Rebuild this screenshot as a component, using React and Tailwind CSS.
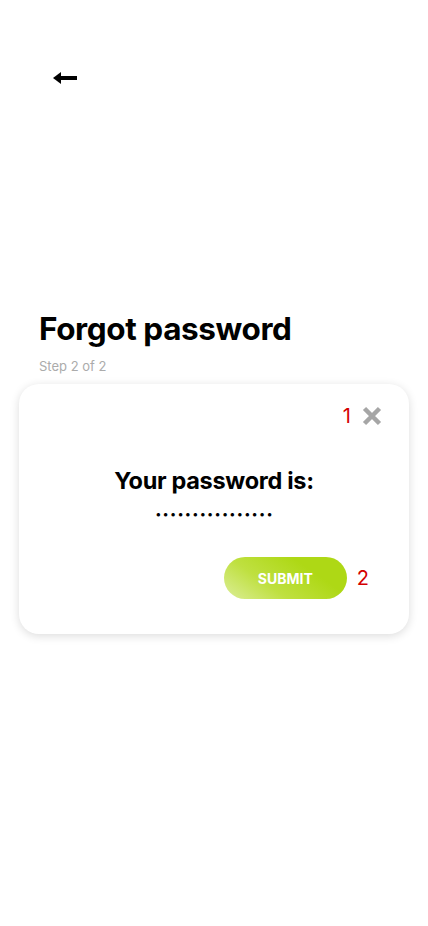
const App = () => {
  return (
    <div className="w-[428px] min-h-[926px] bg-white font-['Inter',sans-serif]">
      {/* Back */}
      <div className="pt-[70px] pl-[52px] h-[300px]">
        <button className="block">
          <svg width="26" height="16" viewBox="0 0 26 16">
            <path d="M9 2 L1 8 L9 14 Z" fill="#000" />
            <rect x="7" y="6" width="18" height="4" fill="#000" />
          </svg>
        </button>
      </div>

      {/* Heading */}
      <div className="pl-[39px] pt-[10px]">
        <h1 className="text-[31.5px] leading-[38px] font-bold text-black tracking-[-0.4px]">
          Forgot password
        </h1>
        <p className="mt-[10px] text-[13px] leading-[16px] text-[#ababab]">
          Step 2 of 2
        </p>
      </div>

      {/* Card */}
      <div className="mx-[19px] mt-[10px] h-[250px] rounded-[20px] bg-white shadow-[0_2px_10px_rgba(0,0,0,0.14)] flex flex-col">
        <div className="flex justify-end items-center pt-[20px] pr-[27px] gap-[11px]">
          <span className="text-[20px] leading-[24px] text-[#d40000]">1</span>
          <svg width="20" height="20" viewBox="0 0 20 20">
            <path d="M2.5 2.5 L17.5 17.5 M17.5 2.5 L2.5 17.5" stroke="#a6a6a6" strokeWidth="4.5" />
          </svg>
        </div>
        <div className="flex flex-col items-center mt-[39px]">
          <h2 className="text-[23.5px] leading-[28px] font-bold text-black tracking-[-0.3px]">
            Your password is:
          </h2>
          <p className="mt-[9px] text-[11px] leading-[20px] font-bold text-black tracking-[2.2px] pl-[2px]">
            ••••••••••••••••
          </p>
        </div>
        <div className="flex justify-end items-center mt-[33px] pr-[40px] gap-[10px]">
          <button className="w-[123px] h-[42px] rounded-full bg-[linear-gradient(35deg,#dcee9a_0%,#bfe040_35%,#aed815_70%)] text-white text-[14px] font-bold">
            SUBMIT
          </button>
          <span className="text-[20px] leading-[24px] text-[#d40000]">2</span>
        </div>
      </div>
    </div>
  );
};

export default App;
